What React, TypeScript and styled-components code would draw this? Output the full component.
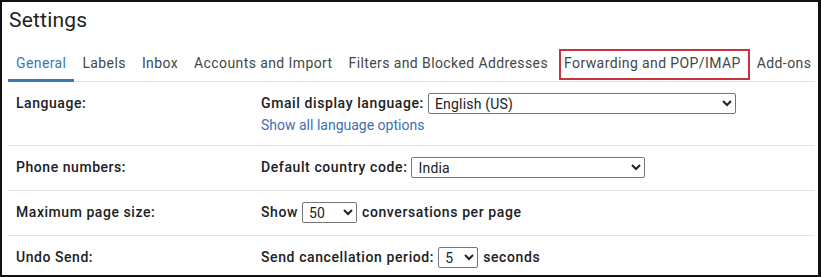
import React from "react";
import styled, { createGlobalStyle } from "styled-components";

const Global = createGlobalStyle`
  html, body { margin: 0; padding: 0; background: #fff; }
  body { font-family: Roboto, "Open Sans", Arial, sans-serif; }
  *, *::before, *::after { box-sizing: border-box; }
`;

const Frame = styled.div`
  width: 821px;
  height: 277px;
  border: 2px solid #111;
  border-right-width: 3px;
  overflow: hidden;
  background: #fff;
  padding: 0 3px 0 6px;
`;

const Title = styled.h1`
  margin: 0;
  padding: 5px 0 0 1px;
  height: 34px;
  font-size: 21px;
  line-height: 26px;
  font-weight: 400;
  color: #1f1f1f;
  letter-spacing: 0.2px;
`;

const TabBar = styled.nav`
  display: flex;
  align-items: stretch;
  height: 46px;
  border-bottom: 1px solid #e3e3e3;
`;

const Tab = styled.div<{ $active?: boolean }>`
  position: relative;
  display: flex;
  align-items: center;
  flex-shrink: 0;
  white-space: nowrap;
  padding: 10px 8px 0;
  font-size: 14px;
  letter-spacing: 0.4px;
  color: ${(p) => (p.$active ? "#3b78b6" : "#444746")};
  border-bottom: 3px solid ${(p) => (p.$active ? "#3b78b6" : "transparent")};
  margin-bottom: -1px;
`;

const HighlightBox = styled.span`
  position: absolute;
  left: 3px;
  right: -1px;
  top: 13px;
  bottom: -1px;
  border: 2px solid #c4343f;
  pointer-events: none;
`;

const Row = styled.div<{ $h: number }>`
  display: grid;
  grid-template-columns: 245px 1fr;
  align-items: start;
  height: ${(p) => p.$h}px;
  border-bottom: 1px solid #e3e3e3;
  padding: 11px 0 0 8px;
  &:last-child { border-bottom: none; }
`;

const Label = styled.div`
  font-size: 14px;
  font-weight: 500;
  color: #202124;
  line-height: 21px;
  letter-spacing: 0.55px;
`;

const Value = styled.div`
  display: flex;
  flex-direction: column;
  gap: 1px;
`;

const Line = styled.div`
  display: flex;
  align-items: center;
  font-size: 14px;
  font-weight: 500;
  color: #202124;
  letter-spacing: 0.6px;
  line-height: 21px;
  white-space: nowrap;
`;

const Select = styled.select<{ $w: number }>`
  width: ${(p) => p.$w}px;
  height: 21px;
  margin: 0 5px 0 4px;
  font-family: Roboto, Arial, sans-serif;
  font-size: 14px;
  letter-spacing: 0.2px;
  color: #202124;
  border: 1px solid #767676;
  border-radius: 2px;
  background: #fff;
  padding: 0 2px;
`;

const Link = styled.a`
  font-size: 14px;
  color: #3d6fb3;
  text-decoration: none;
  line-height: 21px;
  letter-spacing: 0px;
`;

export default function App() {
  return (
    <>
      <Global />
      <Frame>
        <Title>Settings</Title>
        <TabBar>
          <Tab $active>General</Tab>
          <Tab>Labels</Tab>
          <Tab>Inbox</Tab>
          <Tab>Accounts and Import</Tab>
          <Tab>Filters and Blocked Addresses</Tab>
          <Tab>
            Forwarding and POP/IMAP
            <HighlightBox />
          </Tab>
          <Tab>Add-ons</Tab>
        </TabBar>
        <Row $h={64}>
          <Label>Language:</Label>
          <Value>
            <Line>
              Gmail display language:
              <Select $w={308} defaultValue="en">
                <option value="en">English (US)</option>
              </Select>
            </Line>
            <Link href="#">Show all language options</Link>
          </Value>
        </Row>
        <Row $h={45}>
          <Label>Phone numbers:</Label>
          <Value>
            <Line>
              Default country code:
              <Select $w={234} defaultValue="in">
                <option value="in">India</option>
              </Select>
            </Line>
          </Value>
        </Row>
        <Row $h={45}>
          <Label>Maximum page size:</Label>
          <Value>
            <Line>
              Show
              <Select $w={55} defaultValue="50">
                <option value="50">50</option>
              </Select>
              conversations per page
            </Line>
          </Value>
        </Row>
        <Row $h={45}>
          <Label>Undo Send:</Label>
          <Value>
            <Line>
              Send cancellation period:
              <Select $w={40} defaultValue="5">
                <option value="5">5</option>
              </Select>
              seconds
            </Line>
          </Value>
        </Row>
      </Frame>
    </>
  );
}
